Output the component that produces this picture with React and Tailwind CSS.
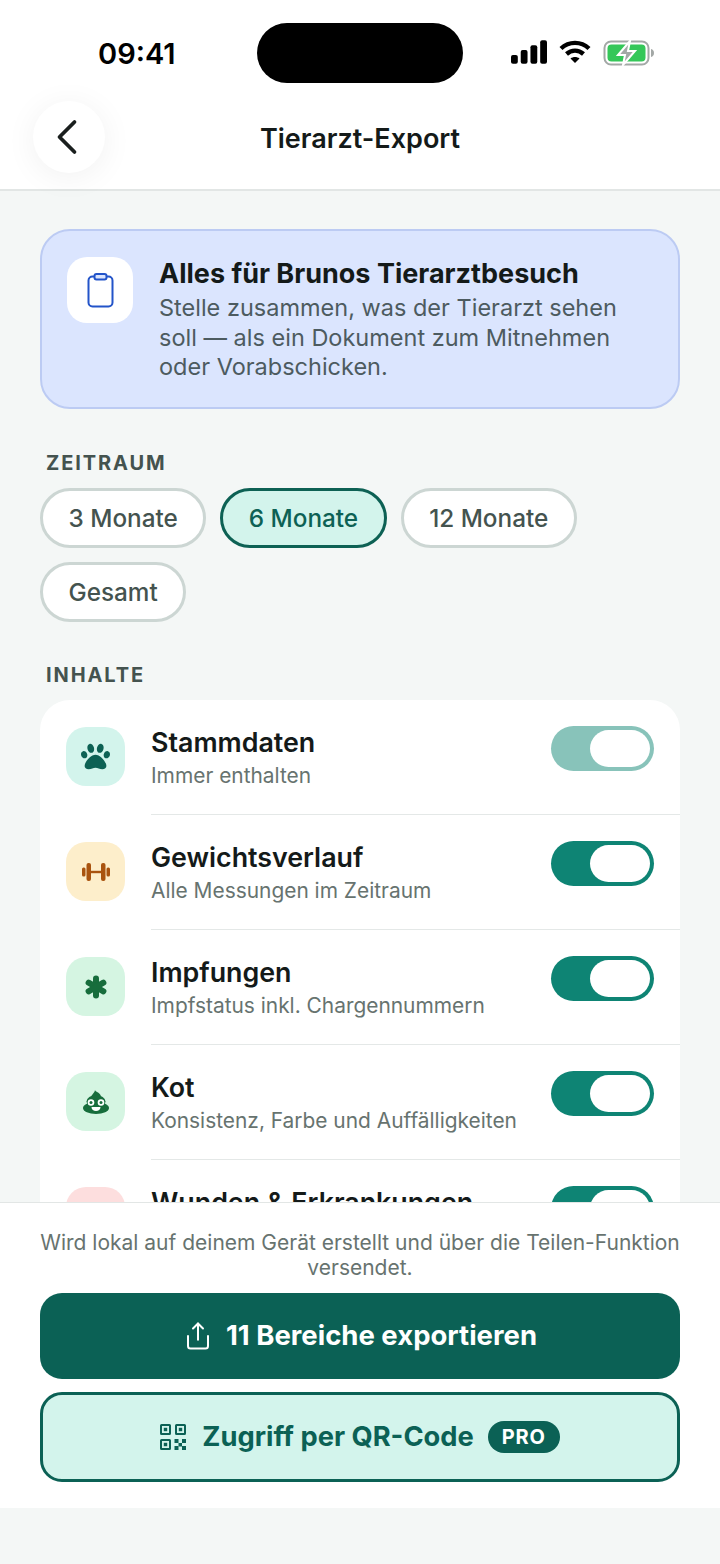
import React from 'react';
import { ChevronLeft, Share } from 'lucide-react';
import { FaPaw } from 'react-icons/fa';

function DumbbellIcon() {
  return (
    <svg width="28" height="18" viewBox="0 0 28 18" fill="currentColor">
      <rect x="0" y="4.500" width="3.500" height="9" rx="1.500" />
      <rect x="4.500" y="0" width="4.500" height="18" rx="2" />
      <rect x="9" y="7.800" width="10" height="2.400" />
      <rect x="19" y="0" width="4.500" height="18" rx="2" />
      <rect x="24.500" y="4.500" width="3.500" height="9" rx="1.500" />
    </svg>
  );
}

function AsteriskIcon() {
  return (
    <svg width="24" height="24" viewBox="0 0 24 24" fill="none" stroke="currentColor" strokeWidth="6" strokeLinecap="round">
      <path d="M12 3.500V20.500" />
      <path d="M4.600 7.700L19.400 16.300" />
      <path d="M19.400 7.700L4.600 16.300" />
    </svg>
  );
}

function PooIcon() {
  return (
    <svg width="26" height="24" viewBox="0 0 26 24">
      <path d="M12 0c.5 2 4.500 2.500 5.500 5 .4 1 .2 1.800 0 2.500H8.500C8 4.500 11.500 3.500 12 0z" fill="currentColor" />
      <ellipse cx="13" cy="11.500" rx="9.500" ry="6.500" fill="currentColor" />
      <ellipse cx="13" cy="18" rx="13" ry="6" fill="currentColor" />
      <circle cx="8" cy="12.500" r="3.300" fill="#fff" />
      <circle cx="18" cy="12.500" r="3.300" fill="#fff" />
      <circle cx="8" cy="12.500" r="1.500" fill="currentColor" />
      <circle cx="18" cy="12.500" r="1.500" fill="currentColor" />
      <path d="M8.500 17h9c0 2.500-2 4-4.500 4s-4.500-1.500-4.500-4z" fill="#fff" />
    </svg>
  );
}

function ClipboardIcon() {
  return (
    <svg width="27" height="35" viewBox="0 0 27 35" fill="none" stroke="#2354c9" strokeWidth="2">
      <rect x="1.500" y="3.500" width="24" height="30" rx="4" />
      <rect x="7.500" y="1" width="12" height="5.500" rx="2" fill="#dbe5fe" />
    </svg>
  );
}

function QrIcon() {
  return (
    <svg width="26" height="26" viewBox="0 0 26 26" fill="currentColor">
      <path fillRule="evenodd" d="M1.500 0h8A1.500 1.500 0 0 1 11 1.500v8A1.500 1.500 0 0 1 9.500 11h-8A1.500 1.500 0 0 1 0 9.500v-8A1.500 1.500 0 0 1 1.500 0zM2 2v7h7V2z" />
      <rect x="3.800" y="3.800" width="3.400" height="3.400" />
      <path fillRule="evenodd" d="M16.500 0h8A1.500 1.500 0 0 1 26 1.500v8a1.500 1.500 0 0 1-1.500 1.500h-8A1.500 1.500 0 0 1 15 9.500v-8A1.500 1.500 0 0 1 16.500 0zM17 2v7h7V2z" />
      <rect x="18.800" y="3.800" width="3.400" height="3.400" />
      <path fillRule="evenodd" d="M1.500 15h8a1.500 1.500 0 0 1 1.500 1.500v8A1.500 1.500 0 0 1 9.500 26h-8A1.500 1.500 0 0 1 0 24.500v-8A1.500 1.500 0 0 1 1.500 15zM2 17v7h7v-7z" />
      <rect x="3.800" y="18.800" width="3.400" height="3.400" />
      <rect x="14.500" y="15" width="4" height="4" />
      <rect x="22" y="15" width="4" height="4" />
      <rect x="18.500" y="19" width="3.500" height="3.500" />
      <rect x="14.500" y="22" width="4" height="4" />
      <rect x="22" y="22" width="4" height="4" />
    </svg>
  );
}

// the last row runs under the footer, only its top edge shows
const rows = [
  { title: 'Stammdaten', sub: 'Immer enthalten', tile: 'bg-[#d3f4ec]', color: 'text-[#0d6154]', icon: <FaPaw size={29} />, locked: true },
  { title: 'Gewichtsverlauf', sub: 'Alle Messungen im Zeitraum', tile: 'bg-[#fdeecb]', color: 'text-[#a9530f]', icon: <DumbbellIcon /> },
  { title: 'Impfungen', sub: 'Impfstatus inkl. Chargennummern', tile: 'bg-[#d5f5e2]', color: 'text-[#176d3c]', icon: <AsteriskIcon /> },
  { title: 'Kot', sub: 'Konsistenz, Farbe und Auffälligkeiten', tile: 'bg-[#d5f5e2]', color: 'text-[#176d3c]', icon: <PooIcon /> },
  { title: 'Wunden & Erkrankungen', tile: 'bg-[#fddede]', color: 'text-[#b91c1c]', icon: null },
];

function Toggle({ locked }) {
  return (
    <div className={`flex h-[45px] w-[103px] shrink-0 items-center justify-end rounded-full p-1 ${locked ? 'bg-[#88c3ba]' : 'bg-[#0e8474]'}`}>
      <div className="h-[37px] w-[60px] rounded-full bg-white" />
    </div>
  );
}

function Chip({ label, active }) {
  return (
    <div
      className={`flex h-[60px] items-center rounded-full border-[3px] px-[25.5px] text-[24.3px] font-[550] ${
        active ? 'border-[#0d6154] bg-[#d3f4ec] text-[#0d6154]' : 'border-[#ccd6d3] bg-white text-[#44534f]'
      }`}
    >
      {label}
    </div>
  );
}

function Row({ row, last }) {
  return (
    <div className="flex h-[115px] shrink-0 pl-[26px]">
      <div className={`mt-[27px] flex h-[59px] w-[59px] shrink-0 items-center justify-center rounded-[20px] ${row.tile} ${row.color}`}>
        {row.icon}
      </div>
      <div className={`ml-[26px] flex flex-1 items-start justify-between pr-[26px] ${last ? '' : 'border-b border-[#e4e8e7]'}`}>
        <div className="pt-[24px]">
          <div className="text-[26.8px] leading-[36px] font-semibold text-[#141a19]">{row.title}</div>
          {row.sub && <div className="mt-[1px] text-[20.9px] leading-[30px] text-[#67736f]">{row.sub}</div>}
        </div>
        <div className="pt-[26px]">
          <Toggle locked={row.locked} />
        </div>
      </div>
    </div>
  );
}

export default function App() {
  return (
    <div className="flex h-[1564px] w-[720px] flex-col overflow-hidden bg-[#f4f7f6] font-['Inter',sans-serif]">
      <header className="h-[191px] shrink-0 border-b-2 border-[#e2e6e5] bg-white">
        <div className="grid h-[97px] grid-cols-[257px_206px_1fr]">
          <div className="pt-[36px] pl-[98px] text-[29px] leading-[36px] font-semibold text-black">09:41</div>
          <div className="mt-[23px] h-[60px] rounded-full bg-black" />
          <div className="flex items-start gap-[12px] pt-[40px] pl-[48px]">
            <svg width="36" height="24" viewBox="0 0 37 24" fill="#000">
              <rect x="0" y="15" width="7" height="9" rx="2" />
              <rect x="10" y="10" width="7" height="14" rx="2" />
              <rect x="20" y="5" width="7" height="19" rx="2" />
              <rect x="30" y="0" width="7" height="24" rx="2" />
            </svg>
            <svg width="32" height="24" viewBox="0 0 32 24" fill="none" stroke="#000" strokeWidth="4.400">
              <path d="M2 8.500C10 1 22 1 30 8.500" />
              <path d="M7.500 14C12.500 9.500 19.500 9.500 24.500 14" />
              <path d="M16 23L11.500 18.600C14 16.600 18 16.600 20.500 18.600Z" fill="#000" stroke="none" />
            </svg>
            <svg width="52" height="26" viewBox="0 0 52 26">
              <rect x="1.500" y="1.500" width="44" height="23" rx="6.500" fill="none" stroke="#a3a8a6" strokeWidth="2" />
              <rect x="4.500" y="4.500" width="38" height="17" rx="4" fill="#35c759" />
              <path d="M48 9c2 .5 3 2 3 4s-1 3.500-3 4z" fill="#a3a8a6" />
              <path d="M27 1L15 15h7l-2 10 12-14h-7z" fill="#a3a8a6" stroke="#fff" strokeWidth="2" />
            </svg>
          </div>
        </div>
        <div className="flex h-[92px] items-start">
          <div className="relative z-10 mt-[4px] ml-[33px] flex h-[72px] w-[72px] items-center justify-center rounded-full bg-white shadow-[0_4px_32px_rgba(0,0,0,0.06)]">
            <ChevronLeft size={60} strokeWidth={1.5} className="mr-[5px] text-[#1a1f1e]" />
          </div>
          <div className="-ml-[105px] w-full pt-[24px] text-center text-[27px] leading-[36px] font-semibold text-[#141a19]">Tierarzt-Export</div>
        </div>
      </header>

      <main className="min-h-0 flex-1 overflow-hidden px-[40px] pt-[38px]">
        <section className="flex h-[180px] rounded-[30px] border-2 border-[#bccbf3] bg-[#dbe5fe] pt-[26px] pl-[25px]">
          <div className="flex h-[66px] w-[66px] shrink-0 items-center justify-center rounded-[20px] bg-white">
            <ClipboardIcon />
          </div>
          <div className="ml-[26px]">
            <div className="text-[27px] leading-[34px] font-bold text-[#141a19]">Alles für Brunos Tierarztbesuch</div>
            <div className="mt-[2px] w-[480px] text-[23.5px] leading-[29.500px] text-[#4d5b60]">
              Stelle zusammen, was der Tierarzt sehen soll — als ein Dokument zum Mitnehmen oder Vorabschicken.
            </div>
          </div>
        </section>

        <div className="mt-[41px] pl-[6px] text-[20px] leading-[26px] font-bold tracking-[1.9px] text-[#44534f]">ZEITRAUM</div>
        <div className="mt-[12px] flex flex-wrap gap-[14px]">
          <Chip label="3 Monate" />
          <Chip label="6 Monate" active />
          <Chip label="12 Monate" />
          <Chip label="Gesamt" />
        </div>

        <div className="mt-[40px] pl-[6px] text-[20px] leading-[26px] font-bold tracking-[1.9px] text-[#44534f]">INHALTE</div>
        <div className="mt-[12px] flex flex-col overflow-hidden rounded-t-[30px] bg-white">
          {rows.map((row, i) => (
            <Row key={row.title} row={row} last={i === rows.length - 1} />
          ))}
        </div>
      </main>

      <footer className="h-[306px] shrink-0 border-t border-[#e2e6e5] bg-white px-[40px] pt-[27px]">
        <p className="text-center text-[21px] leading-[25px] text-[#67736f]">
          Wird lokal auf deinem Gerät erstellt und über die Teilen-Funktion versendet.
        </p>
        <button className="mt-[13px] flex h-[86px] w-full items-center justify-center gap-[13px] rounded-[22px] bg-[#0b6155] text-[27.5px] font-bold text-white">
          <Share size={30} strokeWidth={1.6} />
          11 Bereiche exportieren
        </button>
        <button className="mt-[13px] flex h-[90px] w-full items-center justify-center gap-[16px] rounded-[22px] border-[3px] border-[#0b6155] bg-[#d3f4ec] text-[27.3px] font-bold text-[#0b6155]">
          <QrIcon />
          <span>Zugriff per QR-Code</span>
          <span className="-ml-[2px] flex h-[32px] items-center rounded-full bg-[#0b6155] px-[14px] text-[20px] font-bold tracking-[0.8px] text-white">PRO</span>
        </button>
      </footer>
      <div className="h-[56px] shrink-0" />
    </div>
  );
}
